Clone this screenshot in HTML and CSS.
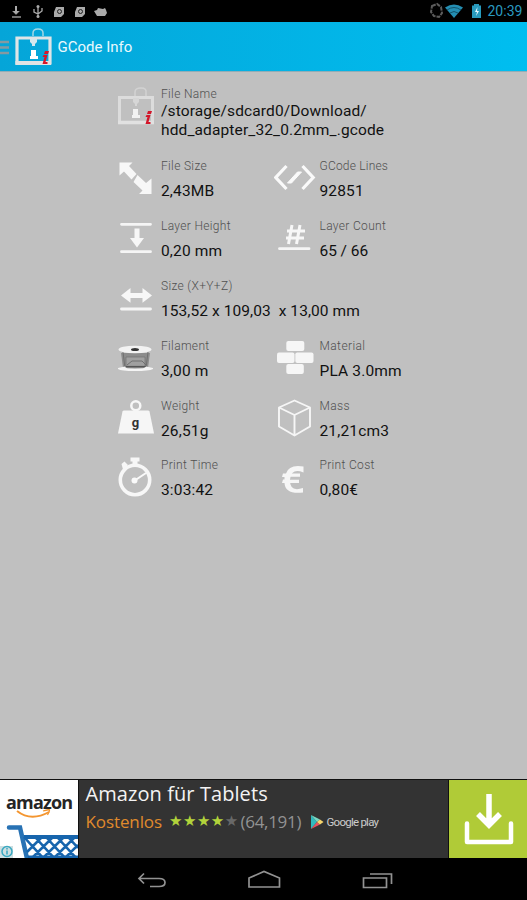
FILE: index.html
```html
<!DOCTYPE html>
<html lang="en">
<head>
<meta charset="utf-8">
<title>GCode Info</title>
<link rel="stylesheet" href="styles.css">
</head>
<body>
<div class="status">
  <svg class="status-left" viewBox="0 0 110 22">
    <g fill="none" stroke="#aaa" stroke-width="2"><path d="M16 6v7" /><path d="M12 17h9" stroke-width="1.300"/><path d="M12.500 11l3.500 3.500 3.500-3.500" fill="#aaa" stroke-width="0.500"/><path d="M38 7v10M34 9v3l4 2 4-3V8" stroke-width="1.300"/></g>
    <g fill="#aaa"><circle cx="38" cy="6.500" r="1.500"/><circle cx="38" cy="16.500" r="1.500"/><path d="M56 7h8v7l-3 3h-7v-5zM77 7h8v7l-3 3h-7v-5z"/><path d="M94 11l3-1 1-2 5 1 2-1 1 2 1 3-2 3H97z"/></g>
    <g fill="none" stroke="#222"><circle cx="59.500" cy="11.500" r="2"/><circle cx="80.500" cy="11.500" r="2"/></g>
  </svg>
  <svg class="status-right" viewBox="0 0 60 22">
    <path d="M4 6l5-2 4 3 1 6-3 4-5-1-3-4z" fill="none" stroke="#5c5c5c" stroke-width="2" stroke-dasharray="4 1"/>
    <path d="M17 7.500q9-6 18 0L26 18z" fill="#248eb2"/><path d="M19 10q7-5 14 0M22 13q4-3 8 0" fill="none" stroke="#08384a" stroke-width=".7"/>
    <path d="M44 5.500h2V4h5v1.500h2V18h-9z" fill="#299abd"/><path d="M49.500 7L47 12h2l-1 4 3-5h-2z" fill="#e5f8ff"/>
  </svg>
  <span class="clock">20:39</span>
</div>
<header class="bar">
  <svg class="logo" viewBox="0 0 56 49">
    <path d="M0 20h9M0 25.500h9M0 31h9" stroke="#8699a0" stroke-width="2.400"/>
    <path d="M33 14V11q0-4 5-4t5 4v3" fill="none" stroke="#a3d7e5" stroke-width="1.500"/>
    <path d="M17 16h33v25H17z" fill="none" stroke="#dfe5e7" stroke-width="3.200"/>
    <path d="M15.400 41H51" stroke="#e1e3e4" stroke-width="4"/>
    <path d="M30 17h7v3l-2 2v2h-3v-2l-2-2z" fill="#d3e8ee"/><path d="M31 28h5v6h2v3h-8v-3h1z" fill="#fff"/>
    <path d="M45 29h4l-1 3h-4zM43.500 33h4l-2 7h2v2h-5l2-7h-2z" fill="#d5162a"/>
  </svg>
  <h1>GCode Info</h1>
</header>
<main class="info">
  <section class="cell wide file">
    <svg viewBox="0 0 46 44"><path d="M20 11V6q0-4 6-4t5 5v4" fill="none" stroke="#d2d2d2" stroke-width="1.500"/><path d="M4.500 11.500h33v25h-33z" fill="none" stroke="#dcdcdc" stroke-width="3"/><path d="M3 36.500h36" stroke="#e1e1e1" stroke-width="3.500"/><path d="M18 12h6v4l-2 2v2h-2v-2l-2-2z" fill="#d6d6d6"/><path d="M18 23h5v6h2v3h-8v-3h1z" fill="#f2f2f2"/><path d="M33 25h4l-1 3h-4zM31.500 29h4l-2 7h2v2h-5l2-7h-2z" fill="#d3162a"/></svg>
    <div><h2>File Name</h2><p>/storage/sdcard0/Download/<br>hdd_adapter_32_0.2mm_.gcode</p></div>
  </section>
  <section class="cell">
    <svg viewBox="0 0 46 44"><path d="M4.500 4.500h13l-3.500 3.500 7.500 8-5 5.500-7.500-8-4.500 4zM22.500 17l8.500 8 5.500-4.500V36H24l3.500-3.500-9-8.500z" fill="#f7f7f7"/></svg>
    <div><h2>File Size</h2><p>2,43MB</p></div>
  </section>
  <section class="cell">
    <svg viewBox="0 0 46 44"><path d="M12.500 8L1.800 19.500l10.700 11.500M28.500 8l10.700 11.500L28.500 31" fill="none" stroke="#fafafa" stroke-width="3.200"/><path d="M13.500 25h4l10-11h-4z" fill="#fafafa" stroke="#fafafa"/></svg>
    <div><h2 class="lines">GCode Lines</h2><p>92851</p></div>
  </section>
  <section class="cell">
    <svg viewBox="0 0 46 44"><path d="M6.500 6.300h29M6.500 33.700h29" stroke="#f5f5f5" stroke-width="2.800" stroke-linecap="round"/><path d="M19.500 10.500h5v9.500H29l-7 9.500-7-9.500h4.500z" fill="#f7f7f7"/></svg>
    <div><h2>Layer Height</h2><p>0,20 mm</p></div>
  </section>
  <section class="cell">
    <svg viewBox="0 0 46 44"><path d="M18 7l-3.500 19M26 7l-3.500 19M13 13h18M12 20h18" stroke="#f7f7f7" stroke-width="3"/><path d="M5.500 30.700h29.500" stroke="#f5f5f5" stroke-width="2.800" stroke-linecap="round"/></svg>
    <div><h2>Layer Count</h2><p class="layers">65 / 66</p></div>
  </section>
  <section class="cell wide">
    <svg viewBox="0 0 46 44"><path d="M6 17.400l9.500-7.400v4.900h12V10l9.500 7.400-9.500 7.400V20h-12v4.800z" fill="#f7f7f7"/><path d="M6.500 31h29" stroke="#f5f5f5" stroke-width="2.800" stroke-linecap="round"/></svg>
    <div><h2>Size (X+Y+Z)</h2><p class="size">153,52 x 109,03 &nbsp;x 13,00 mm</p></div>
  </section>
  <section class="cell">
    <svg viewBox="0 0 46 44"><path d="M6 15h29l-2 15H8z" fill="#8c8c8c"/><path d="M11 19h19v10H11z" fill="#a0a0a0" stroke="#707070" stroke-width=".7"/><path d="M8 14l2 16M33 14l-2 16M12 27l5-4h10l4 4" fill="none" stroke="#707070"/><path d="M11 28.500h20" stroke="#555" stroke-width="1.200"/><ellipse cx="20" cy="11.500" rx="16.500" ry="3.800" fill="#f2f2f2"/><ellipse cx="20" cy="11.500" rx="4" ry="1.600" fill="#333"/><path d="M3 30l7-1.500q0 2.500 10 2.500t11-2.500l7 1.500v1q-4 2-18 2T3 31z" fill="#f4f4f4"/></svg>
    <div><h2>Filament</h2><p>3,00 m</p></div>
  </section>
  <section class="cell">
    <svg viewBox="0 0 46 44"><g fill="#f6f6f6"><rect x="12.300" y="3" width="18" height="10" rx="2"/><rect x="3" y="14.500" width="17.500" height="10.500" rx="2"/><rect x="21.300" y="14.500" width="18.200" height="10.500" rx="2"/><rect x="12.300" y="26" width="17.500" height="10" rx="2"/></g></svg>
    <div><h2 class="loose">Material</h2><p>PLA 3.0mm</p></div>
  </section>
  <section class="cell">
    <svg viewBox="0 0 46 44"><circle cx="20.800" cy="7.700" r="4.500" fill="none" stroke="#f7f7f7" stroke-width="2.500"/><path d="M9 12.500h24q1 0 1.500 1L39 35.500H3L7.500 13.500q.5-1 1.500-1z" fill="#f6f6f6"/><text class="gram" x="16.800" y="28.500">g</text></svg>
    <div><h2>Weight</h2><p>26,51g</p></div>
  </section>
  <section class="cell">
    <svg viewBox="0 0 46 44"><path d="M20.500 2.500L36 9.500v19l-15.500 9L5 28.500v-19zM5 9.500l15.500 7.500L36 9.500M20.500 17v20" fill="none" stroke="#f6f6f6" stroke-width="1.900" stroke-linejoin="round"/></svg>
    <div><h2>Mass</h2><p>21,21cm3</p></div>
  </section>
  <section class="cell">
    <svg viewBox="0 0 46 44"><circle cx="20" cy="23" r="14.700" fill="none" stroke="#f7f7f7" stroke-width="3.600"/><path d="M15.500 .5h9v4h-2v5h-5v-5h-2zM6.500 7l3-2.500L13 8 8 12.500z" fill="#f7f7f7"/><circle cx="19.500" cy="23.500" r="3" fill="#fafafa"/><path d="M19 24l12-8" stroke="#fafafa" stroke-width="2"/></svg>
    <div><h2>Print Time</h2><p>3:03:42</p></div>
  </section>
  <section class="cell">
    <svg viewBox="0 0 46 44"><path d="M29.500 9.500v6q-12-5-13.500 7-.5 13 13 8.500v4.500Q11 37.500 10.500 26H8l1-3.500h1.500V20H8l1-3.500h3Q15 7 29.500 9.500z" fill="#f6f6f6"/><path d="M14 18.200h12M14 24.300h11" stroke="#f6f6f6" stroke-width="3.200"/></svg>
    <div><h2>Print Cost</h2><p>0,80€</p></div>
  </section>
</main>
<aside class="ad">
  <div class="brand">
    <span>amazon</span>
    <svg viewBox="0 0 78 79"><path d="M17 31q14 11 32 1" fill="none" stroke="#f49630" stroke-width="2"/><path d="M43 31q7-2 6.500-1 0 2-2 5" fill="none" stroke="#f49630" stroke-width="1.300"/><path d="M9 47.500h11l7 31" fill="none" stroke="#2872b4" stroke-width="4.500" stroke-linecap="round"/><path d="M24 57h54" stroke="#1765ad" stroke-width="4"/><path d="M24 57l20 22M35 57l20 22M46 57l20 22M57 57l20 22M68 57l10 11M42 57L27 72M53 57L31 79M64 57L42 79M75 57L53 79M78 65L64 79" fill="none" stroke="#1765ad" stroke-width="2.600"/><path d="M28 77h50" stroke="#1765ad" stroke-width="3"/><path d="M0 66h13v13H0z" fill="#cfdfe1"/><circle cx="7" cy="71.500" r="5" fill="none" stroke="#39a8c1" stroke-width="1.500"/><path d="M7 70.500v4M7 68v1.500" stroke="#39a8c1" stroke-width="1.500"/></svg>
  </div>
  <div class="pitch">
    <h3>Amazon für Tablets</h3>
    <div class="meta"><span class="free">Kostenlos</span><span class="stars">★★★★<i>★</i></span><span class="count">(64,191)</span>
      <svg viewBox="0 0 14 16"><path d="M1 1v14l6-7z" fill="#31b9bd"/><path d="M1 1l9 4.500L7 8z" fill="#78d7c0"/><path d="M1 15l9-4.500L7 8z" fill="#e7525d"/><path d="M10 5.500L13.500 8 10 10.500 7 8z" fill="#f5d46c"/></svg>
      <span class="play">Google play</span></div>
  </div>
  <div class="get"><svg viewBox="0 0 78 79"><path d="M18 43.500v18.500h44V43.500" fill="none" stroke="#fff" stroke-width="4.500" stroke-linecap="round" stroke-linejoin="round"/><path d="M40 14v30M29 34l11 11 11-11" fill="none" stroke="#fff" stroke-width="5.500"/></svg></div>
</aside>
<nav class="nav">
  <svg viewBox="0 0 527 42" fill="none" stroke="#929292" stroke-width="1.700"><path d="M139 20.500h20q6 0 6 4t-6 4h-9M144 15.500l-5 5 5 5"/><path d="M249 29V20l15-6.500L279.500 20v9z"/><path d="M363.500 20h23v9.500h-23zM370 16h21.500v10"/></svg>
</nav>
</body>
</html>
```

FILE: styles.css
```css
* { box-sizing: border-box; }
body { margin: 0; width: 527px; height: 900px; display: flex; flex-direction: column; overflow: hidden; background: #c0c0c0; font-family: Roboto, sans-serif; }
h1, h2, h3, p { margin: 0; font-weight: 400; }
svg { display: block; flex: none; }
.status { height: 22px; background: #000; display: flex; align-items: center; }
.status-left { width: 110px; height: 22px; }
.status-right { width: 60px; height: 22px; margin-left: 318px; }
.clock { color: #2a9ac0; font-size: 14px; line-height: 22px; margin-left: -.5px; letter-spacing: 0; }
.bar { height: 50px; display: flex; background: linear-gradient(90deg, #05a5d8, #00bef0); border-bottom: 1px solid #91adb6; }
.logo { width: 56px; height: 49px; }
.bar h1 { color: #e9f9fd; font-size: 15px; line-height: 51px; margin-left: 1.5px; letter-spacing: 0; }
.info { flex: 1; display: grid; grid-template-columns: 158.500px 158.500px; grid-template-rows: 72px; grid-auto-rows: 59.900px; padding: 14px 0 0 115px; }
.cell { display: flex; white-space: nowrap; }
.wide { grid-column: span 2; }
.cell svg { width: 46px; height: 44px; }
.cell h2 { color: #505050; font-size: 12px; line-height: 16px; font-weight: 300; letter-spacing: .33px; }
.cell h2.lines { letter-spacing: .2px; }
.cell h2.loose { letter-spacing: .4px; }
.cell p { color: #111; font-size: 15.500px; line-height: 18px; margin-top: 8px; letter-spacing: .15px; }
.cell.file p { line-height: 19px; margin-top: 0; letter-spacing: .13px; }
.cell p.size { letter-spacing: .08px; }
.cell p.layers { letter-spacing: -.05px; }
.gram { font: bold 13px Roboto, sans-serif; fill: #333; }
.ad { height: 79px; display: flex; background: #333; border-top: 1px solid #111; }
.brand { width: 78px; background: #fff; display: grid; overflow: hidden; }
.brand > * { grid-area: 1 / 1; }
.brand span { font: bold 18px/20px "Open Sans", sans-serif; color: #252525; margin: 12px 0 0 6px; letter-spacing: -.8px; }
.brand svg { width: 78px; height: 79px; }
.pitch { flex: 1; padding-left: 6.500px; border-left: 1px solid #111; border-right: 1px solid #111; white-space: nowrap; }
.pitch h3 { font: 20px/28px "Open Sans", sans-serif; color: #f3f3f3; letter-spacing: .08px; }
.meta { display: flex; align-items: center; height: 27px; }
.free { font: 17px/27px "Open Sans", sans-serif; color: #e08b2c; width: 83.500px; letter-spacing: -.1px; }
.stars { font: 15px/27px "DejaVu Sans", sans-serif; color: #b2d33b; width: 71.500px; letter-spacing: .5px; }
.stars i { font-style: normal; color: #686868; }
.count { font: 17px/27px "Open Sans", sans-serif; color: #929292; width: 69px; letter-spacing: -.3px; }
.meta svg { width: 14px; height: 16px; }
.play { color: #ccc; font-size: 11.500px; margin-left: 3px; letter-spacing: -.75px; }
.get { width: 78px; background: #b0cb37; }
.get svg { width: 78px; height: 79px; }
.nav { height: 42px; background: #000; }
.nav svg { width: 527px; height: 42px; }
```
